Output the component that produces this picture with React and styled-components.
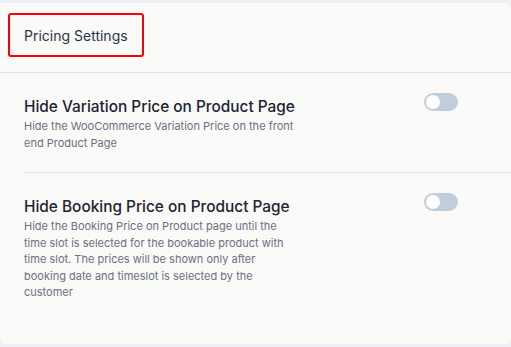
import React, { useState } from "react";
import styled, { createGlobalStyle } from "styled-components";

const GlobalStyle = createGlobalStyle`
  html, body {
    margin: 0;
    padding: 0;
    background: #efeff4;
    font-family: Inter, "Noto Sans", sans-serif;
  }
`;

const Page = styled.div`
  padding-top: 3px;
  height: 347px;
  box-sizing: border-box;
`;

const Card = styled.div`
  background: #fafaf9;
  height: 341px;
  border-radius: 0 6px 6px 6px;
  box-sizing: border-box;
`;

const Header = styled.div`
  height: 70px;
  padding: 10px 0 0 8px;
  box-sizing: border-box;
  border-bottom: 1px solid #e2e2e2;
`;

const HeaderBox = styled.div`
  display: inline-flex;
  align-items: center;
  width: 136px;
  height: 44px;
  padding: 1px 0 0 14px;
  box-sizing: border-box;
  border: 2px solid #f5000f;
  border-radius: 3px;
`;

const HeaderTitle = styled.h2`
  margin: 0;
  font-size: 14px;
  font-weight: 400;
  color: #2b3447;
`;

const Row = styled.div`
  display: flex;
  align-items: flex-start;
  justify-content: space-between;
  margin-left: 24px;
  padding: 24px 53px 21px 0;
  border-bottom: ${(p) => (p.last ? "none" : "1px solid #e2e2e2")};
`;

const Text = styled.div`
  width: 276px;
`;

const Title = styled.h3`
  margin: 0;
  font-size: 15.4px;
  line-height: 20px;
  font-weight: 500;
  color: #1d2330;
  white-space: nowrap;
`;

const Desc = styled.p`
  margin: 0;
  padding-top: 1px;
  font-size: 11px;
  line-height: 16.5px;
  color: #6b7080;
`;

const Switch = styled.button`
  position: relative;
  flex: none;
  width: 34px;
  height: 18px;
  margin-top: -4px;
  padding: 0;
  border: none;
  border-radius: 9px;
  background: ${(p) => (p.on ? "#3b82f6" : "#c2cddb")};
  cursor: pointer;

  &::after {
    content: "";
    position: absolute;
    top: 2px;
    left: ${(p) => (p.on ? "18px" : "2px")};
    width: 14px;
    height: 14px;
    border-radius: 50%;
    background: #ffffff;
  }
`;

const settings = [
  {
    title: "Hide Variation Price on Product Page",
    desc: "Hide the WooCommerce Variation Price on the front end Product Page",
  },
  {
    title: "Hide Booking Price on Product Page",
    desc: "Hide the Booking Price on Product page until the time slot is selected for the bookable product with time slot. The prices will be shown only after booking date and timeslot is selected by the customer",
  },
];

const App = () => {
  const [state, setState] = useState([false, false]);

  return (
    <>
      <GlobalStyle />
      <Page>
        <Card>
          <Header>
            <HeaderBox>
              <HeaderTitle>Pricing Settings</HeaderTitle>
            </HeaderBox>
          </Header>
          {settings.map((s, i) => (
            <Row key={s.title} last={i === settings.length - 1}>
              <Text>
                <Title>{s.title}</Title>
                <Desc>{s.desc}</Desc>
              </Text>
              <Switch
                on={state[i]}
                onClick={() =>
                  setState(state.map((v, j) => (j === i ? !v : v)))
                }
              />
            </Row>
          ))}
        </Card>
      </Page>
    </>
  );
};

export default App;
